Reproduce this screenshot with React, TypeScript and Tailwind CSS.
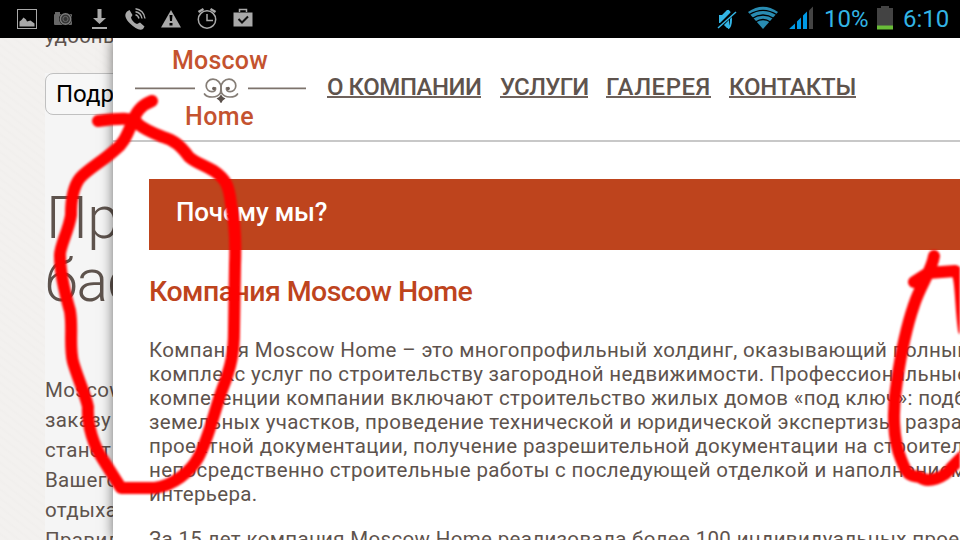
import React from "react";

const NAV = [
  { label: "О КОМПАНИИ", box: "w-[154px] mr-px", track: "tracking-[-0.45px]" },
  { label: "УСЛУГИ", box: "w-[88px]", track: "tracking-[-0.75px]" },
  { label: "ГАЛЕРЕЯ", box: "w-[105px]", track: "tracking-[0.5px]" },
  { label: "КОНТАКТЫ", box: "w-[127px]", track: "tracking-[-0.2px]" },
];

const PARAGRAPH = [
  "Компания Moscow Home – это многопрофильный холдинг, оказывающий полный",
  "комплекс услуг по строительству загородной недвижимости. Профессиональные",
  "компетенции компании включают строительство жилых домов «под ключ»: подбор",
  "земельных участков, проведение технической и юридической экспертизы, разработку",
  "проектной документации, получение разрешительной документации на строительство",
  "непосредственно строительные работы с последующей отделкой и наполнением",
  "интерьера.",
];

const INTRO = ["Moscow", "заказу", "станет", "Вашего", "отдыха", "Правил"];

function StatusBar() {
  return (
    <header className="flex h-[38px] w-full shrink-0 items-center justify-between bg-black">
      <div className="flex h-[38px] items-center">
        <svg width="270" height="38" viewBox="0 0 270 38" fill="#a9a9a9">
          <rect x="17.5" y="9.5" width="19" height="19" fill="none" stroke="#a9a9a9" />
          <path d="M19.500 26.500v-5l2-1.500 2-2.500 2.500 2 1 2 3.500-1 4 3v3z" />
          <g opacity=".62">
            <rect x="54" y="14" width="18" height="11" rx="1" />
            <path d="M55 12h5v2h-5z" />
            <circle cx="65.500" cy="19" r="6.500" fill="#111" />
            <circle cx="65.500" cy="19" r="5.200" fill="#555" stroke="#c9c9c9" strokeWidth="1.500" />
            <circle cx="65.500" cy="19" r="2.600" fill="none" stroke="#aaa" />
          </g>
          <path d="M97.500 9h4v9h4.500l-6.500 6-6.500-6h4.500z" />
          <path d="M92 27h15v2H92z" />
          <path d="M127 11.500c-3 3-2 7 3 12s10 7.500 13 5.500l1.500-2.500-4.500-4-3 1.500c-3-1-5.500-4-6-6.500l1.500-2.500-3-5z" />
          <g fill="none" stroke="#a9a9a9" strokeWidth="1.400">
            <path d="M135.500 8.700c5 .5 9 4.500 9.500 9.800M135.500 11.700c3.500.5 6 3.500 6.500 6.800M135.500 14.700c2 .5 3 2 3.500 3.800" />
          </g>
          <path d="M171 10l10 17.500h-20z" />
          <path d="M169.500 15h3l-.5 6h-2zM169.500 23h3v2.500h-3z" fill="#000" />
          <g fill="none" stroke="#a9a9a9" strokeWidth="1.500">
            <circle cx="207" cy="19.500" r="8.700" />
            <path d="M207 14v6.500h6" />
            <path d="M198.500 12l5-3M210.500 9l5 3" strokeWidth="2.500" />
          </g>
          <path d="M233.500 12.500h19v14h-19z" />
          <path d="M239.500 12v-2.500h7V12" fill="none" stroke="#a9a9a9" strokeWidth="1.500" />
          <path d="M238.500 19l3.500 3.500 6-6" fill="none" stroke="#111" strokeWidth="2" />
        </svg>
      </div>
      <div className="flex h-[38px] items-center pr-[9px] font-[Roboto] text-[24px] leading-[38px] text-[#33b5e5]">
        <svg width="98" height="38" viewBox="715 0 98 38">
          <path d="M719 15h3l5-5h2v18h-2l-5-5h-3z" fill="#33b5e5" />
          <path d="M728 10.500c4 3 4 15 0 18" fill="none" stroke="#33b5e5" strokeWidth="2" />
          <path d="M735 11l-17 17" stroke="#000" strokeWidth="4" />
          <path d="M736 12l-18 16" stroke="#33b5e5" strokeWidth="1.500" />
          <path d="M748 12q15-10.500 30 0l-15 17z" fill="#298cb2" />
          <g fill="none" stroke="#000" strokeWidth="1.300">
            <path d="M749 14.800q14-9 28 0M752 18.500q11-7 22 0M755.500 22q7.500-5 15 0" />
          </g>
          <path d="M789.500 28.500l5.500-5v5.500h-5.500zM797 21.500l4-4V29h-4zM803 15.500l4-4V29h-4z" fill="#0099e5" />
          <path d="M809 10.500l4-4V29h-4z" fill="#444" />
        </svg>
        <span className="ml-[11px] w-[53px] whitespace-nowrap">10%</span>
        <svg className="mb-[2px]" width="16" height="24" viewBox="0 0 16 24">
          <path d="M0 2h4V0h8v2h4v21H0z" fill="#434343" />
          <path d="M0 19.500h16v4H0z" fill="#69bd38" />
        </svg>
        <span className="ml-[10px] w-[48px] whitespace-nowrap">6:10</span>
      </div>
    </header>
  );
}

function Logo() {
  return (
    <div className="flex w-[171px] flex-col items-center font-[Roboto] text-[25px] font-medium leading-[28px] text-[#c4532f]">
      <span className="mt-[9px] pr-px tracking-[0.2px]">Moscow</span>
      <svg className="mt-px" width="171" height="27" viewBox="135 76 171 27" fill="none" stroke="#7d736c">
        <path d="M135 88.300h60M248 88.300h58" strokeWidth="1.800" />
        <g strokeWidth="1.700" strokeLinecap="round" stroke="#857d76">
          <path d="M220.500 93.500c0-2 .5-4 .5-6 0-4.500-3.500-8.300-8-8.300-4 0-6.800 3-6.800 6.500s2.600 6 5.600 6c2.700 0 4.200-1.800 3.700-3.800M204.500 94c2 3.500 13 5 16-1.500" />
          <path d="M221.500 93.500c0-2-.5-4-.5-6 0-4.500 3.500-8.300 8-8.300 4 0 6.800 3 6.800 6.500s-2.600 6-5.600 6c-2.700 0-4.200-1.800-3.700-3.800M237.500 94c-2 3.500-13 5-16-1.500" />
        </g>
        <g fill="#6c625c" stroke="none">
          <circle cx="213.800" cy="88.500" r="1.700" />
          <circle cx="228.200" cy="88.500" r="1.700" />
          <path d="M221 94.500l1.800 2.500 2.700 1.500-2.700 2-1.800 3-1.800-3-2.700-2 2.700-1.500z" fill="#5a504b" />
        </g>
      </svg>
      <span className="pr-[2px] tracking-[0.5px]">Home</span>
    </div>
  );
}

function Backdrop() {
  return (
    <main className="h-[502px] w-full overflow-hidden bg-[#f2f0ee] bg-[repeating-linear-gradient(38deg,#f3f1ef_0px,#f3f1ef_3px,#f1efed_5px,#f3f1ef_7px)] pl-[45px] font-[Roboto] text-[#5e534d]">
      <p className="h-[35px] overflow-hidden text-[20.5px] leading-[30px]">
        <span className="-mt-[17px] block tracking-[0.35px]">удобные</span>
      </p>
      <section className="h-[467px] w-[200px] bg-[#f5f5f5]">
        <button className="block h-[42px] w-[160px] rounded-lg border border-[#c0c0c0] bg-[#f7f7f7] pl-[10px] text-left text-[24px] leading-[38px] text-black">
          Подробнее
        </button>
        <h1 className="mt-[71px] whitespace-nowrap text-[59px] font-light leading-[63px]">
          <span className="block pl-px tracking-[-0.5px]">Проект</span>
          <span className="block tracking-[-1px]">бассейна</span>
        </h1>
        <div className="mt-[63px] text-[20.5px] leading-[30px] tracking-[0.35px]">
          {INTRO.map((t) => (
            <p key={t}>{t}</p>
          ))}
        </div>
      </section>
    </main>
  );
}

function Dialog() {
  return (
    <div className="absolute left-[113px] top-[38px] h-[502px] w-[900px] overflow-hidden bg-white font-[Roboto] text-[#5e534d] shadow-[0_0_12px_rgba(0,0,0,0.55)]">
      <div className="flex h-[104px] border-b-2 border-[#c8c8c8] pl-[22px]">
        <Logo />
        <nav className="ml-[21px] flex gap-[18px] pt-[35px]">
          {NAV.map((n) => (
            <a key={n.label} className={`${n.box} h-[25px] whitespace-nowrap border-b-2 border-[#6e625c] text-[24px] font-medium leading-[28px] ${n.track}`}>
              {n.label}
            </a>
          ))}
        </nav>
      </div>
      <div className="pl-9">
        <h2 className="mt-[37px] h-[71px] bg-[#be441d] pl-[27px] text-[26px] font-medium leading-[67px] tracking-[-0.2px] text-white">
          Почему мы?
        </h2>
        <h3 className="mt-[24px] text-[28.5px] font-medium leading-[36px] tracking-[-0.55px] text-[#be441d]">
          Компания Moscow Home
        </h3>
        <div className="mt-[28px] whitespace-nowrap text-[20.5px] leading-[24px] tracking-[0.34px]">
          {PARAGRAPH.map((t) => (
            <p key={t}>{t}</p>
          ))}
          <p className="mt-[21px]">За 15 лет компания Moscow Home реализовала более 100 индивидуальных проектов</p>
        </div>
      </div>
    </div>
  );
}

function Markup() {
  return (
    <svg
      className="pointer-events-none absolute left-0 top-0 z-20 blur-[1.3px]"
      width="960"
      height="540"
      viewBox="0 0 960 540"
      fill="none"
      stroke="#ff0000"
      strokeWidth="12"
      strokeLinecap="round"
      strokeLinejoin="round"
    >
      <path d="M152 101C141 105 136 112 132 123C126 138 122 145 115 150C103 161 88 169 80 178C72 188 71 203 71 215C69 230 59 248 60 256C60 270 64 290 70 311C73 328 69 345 73 362C79 382 86 396 88 407C87 426 94 446 102 458L121 488H155C174 485 190 472 198 458C209 438 214 412 222 390C232 365 234 350 234 330L235 265C236 240 235 222 231 204C229 186 226 179 214 171C202 164 196 163 189 157C181 146 174 140 163 137C153 133 145 130 138 124C134 117 119 118 98 121" />
      <path d="M934 256C932 270 920 286 914 305C905 331 901 353 897 381C892 410 893 440 901 459C907 475 909 476 920 477C928 484 945 477 951 468L965 454M914 282L928 273L955 271C962 275 960 303 964 330" />
    </svg>
  );
}

export default function App() {
  return (
    <div className="relative flex h-[540px] w-[960px] flex-col overflow-hidden bg-black">
      <div className="relative z-10">
        <StatusBar />
      </div>
      <Backdrop />
      <Dialog />
      <Markup />
    </div>
  );
}
